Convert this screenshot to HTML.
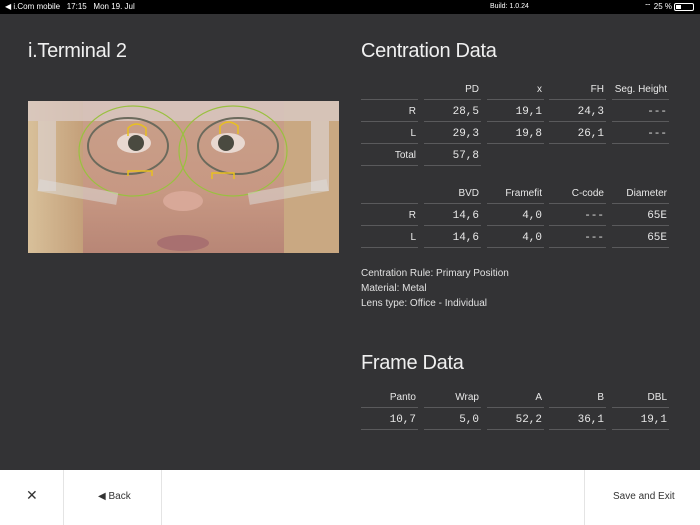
<!DOCTYPE html>
<html><head><meta charset="utf-8"><style>
*{margin:0;padding:0;box-sizing:border-box}
body{width:700px;height:525px;background:#333335;font-family:"Liberation Sans",sans-serif;color:#e8e8e8;position:relative;overflow:hidden}
.a{position:absolute;white-space:nowrap}
.sb{top:0;left:0;width:700px;height:14px;background:#000;font-size:8px;color:#fff}
.h1{font-size:20px;font-weight:300;color:#f0f0f0;letter-spacing:-0.3px}
.c{position:absolute;font-size:10px;text-align:right;padding-right:2px;border-bottom:1px solid #5a5a5c;height:18px;line-height:16px}
.m{font-family:"Liberation Mono",monospace;font-size:11px}
.bar{left:0;top:470px;width:700px;height:55px;background:#fff;color:#333;font-size:10px}
.sep{position:absolute;top:0;width:1px;height:55px;background:#e4e4e4}
.info{font-size:10px;color:#e0e0e0;line-height:15px}
</style></head><body>
<div class="a sb"><span class="a" style="left:5px;top:2px">◀ i.Com mobile&nbsp;&nbsp; 17:15&nbsp;&nbsp; Mon 19. Jul</span><span class="a" style="left:490px;top:3px;font-size:7px">Build: 1.0.24</span><span class="a" style="left:644px;top:2px">⌔ 25 %</span><span class="a" style="left:674px;top:3px;width:20px;height:8px;border:1px solid #fff;border-radius:2px"><span class="a" style="left:1px;top:1px;width:5px;height:4px;background:#fff"></span></span></div>
<div class="a h1" style="left:28px;top:40px">i.Terminal 2</div>
<div class="a h1" style="left:361px;top:40px">Centration Data</div>
<div class="a h1" style="left:361px;top:352px">Frame Data</div>
<svg class="a" style="left:28px;top:101px" width="311" height="152" viewBox="0 0 311 152">
<defs><linearGradient id="s" x1="0" y1="0" x2="0" y2="1"><stop offset="0" stop-color="#c9a08a"/><stop offset=".6" stop-color="#c79883"/><stop offset="1" stop-color="#b88676"/></linearGradient>
<linearGradient id="hl" x1="0" x2="1"><stop offset="0" stop-color="#d8c09a"/><stop offset="1" stop-color="#c4a07a"/></linearGradient></defs>
<rect width="311" height="152" fill="url(#s)"/>
<rect width="55" height="152" fill="url(#hl)"/><rect x="256" width="55" height="152" fill="#c9a882"/>
<rect x="0" y="0" width="311" height="20" fill="#d9c9c4" opacity=".8"/>
<rect x="10" y="20" width="18" height="70" fill="#dcd0cc" opacity=".7"/><rect x="283" y="20" width="18" height="70" fill="#dcd0cc" opacity=".7"/>
<ellipse cx="100" cy="45" rx="40" ry="28" fill="none" stroke="#6b6a5c" stroke-width="2"/>
<ellipse cx="210" cy="45" rx="40" ry="28" fill="none" stroke="#6b6a5c" stroke-width="2"/>
<ellipse cx="106" cy="42" rx="17" ry="10" fill="#e8d8d0"/><ellipse cx="200" cy="42" rx="17" ry="10" fill="#e8d8d0"/>
<circle cx="108" cy="42" r="8" fill="#4a4a40"/><circle cx="198" cy="42" r="8" fill="#4a4a40"/>
<ellipse cx="105" cy="50" rx="54" ry="45" fill="none" stroke="#9ac040" stroke-width="1.2"/>
<ellipse cx="205" cy="50" rx="54" ry="45" fill="none" stroke="#9ac040" stroke-width="1.2"/>
<path d="M100 35v-8q8-8 18 0v8M192 33v-8q8-8 18 0v8M100 75v-5h24v5M184 78v-6h22v6" fill="none" stroke="#e8c020" stroke-width="1.5"/>
<ellipse cx="155" cy="100" rx="20" ry="10" fill="#d8a898"/>
<ellipse cx="155" cy="142" rx="26" ry="8" fill="#a87070"/>
<rect x="10" y="85" width="80" height="12" fill="#ddd" opacity=".5" transform="rotate(10 50 90)"/><rect x="220" y="85" width="80" height="12" fill="#ddd" opacity=".5" transform="rotate(-10 260 90)"/>
</svg>
<div class="a info" style="left:361px;top:266px">Centration Rule: Primary Position<br>Material: Metal<br>Lens type: Office - Individual</div>
<div class="a bar"><div class="sep" style="left:63px"></div><div class="sep" style="left:161px"></div><div class="sep" style="left:584px"></div>
<span class="a" style="left:26px;top:17px;font-size:14px">✕</span>
<span class="a" style="left:98px;top:21px">◀ Back</span>
<span class="a" style="left:613px;top:21px">Save and Exit</span></div>
<script>
var X=[361,424,487,549,612],W=[57,57,57,57,57];
function row(y,cells){cells.forEach(function(c,i){if(c===null)return;var d=document.createElement('div');d.className='c'+(c.m?' m':'');d.style.left=X[i]+'px';d.style.width=W[i]+'px';d.style.top=(y-8)+'px';d.textContent=c.t;document.body.appendChild(d);});}
function T(t){return{t:t}}function M(t){return{t:t,m:1}}
row(90,[T(''),T('PD'),T('x'),T('FH'),T('Seg. Height')]);
row(112,[T('R'),M('28,5'),M('19,1'),M('24,3'),M('---')]);
row(134,[T('L'),M('29,3'),M('19,8'),M('26,1'),M('---')]);
row(156,[T('Total'),M('57,8'),null,null,null]);
row(194,[T(''),T('BVD'),T('Framefit'),T('C-code'),T('Diameter')]);
row(216,[T('R'),M('14,6'),M('4,0'),M('---'),M('65E')]);
row(238,[T('L'),M('14,6'),M('4,0'),M('---'),M('65E')]);
row(398,[T('Panto'),T('Wrap'),T('A'),T('B'),T('DBL')]);
row(420,[M('10,7'),M('5,0'),M('52,2'),M('36,1'),M('19,1')]);
</script>
</body></html>
